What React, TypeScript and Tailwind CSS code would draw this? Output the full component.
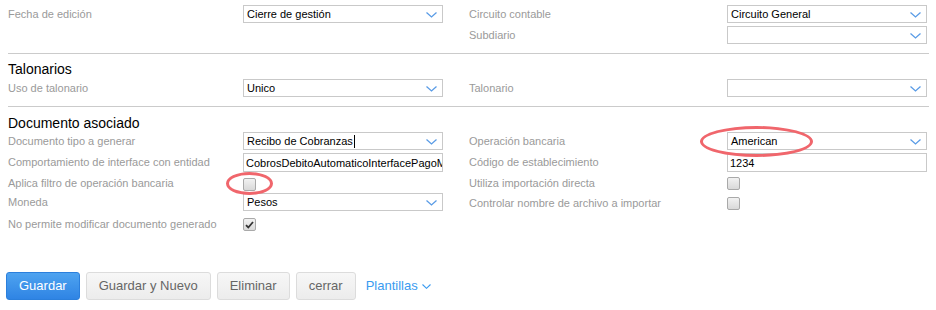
import type { ReactNode } from 'react'

const font = "font-['Liberation_Sans',Arial,sans-serif]"

function Chevron({ className = '' }: { className?: string }) {
  return (
    <svg width="11" height="6" viewBox="0 0 11 6" className={className}>
      <path d="M0.5 0.5 L5.5 5 L10.5 0.5" fill="none" stroke="#5a9ce6" strokeWidth="1.3" />
    </svg>
  )
}

function Select({ value, caret }: { value?: string; caret?: boolean }) {
  return (
    <div className="relative flex h-[18px] w-[200px] items-center border border-[#c9c9c9] bg-white pl-[3px] pr-[20px] pt-px text-[11px] text-black">
      <span className="whitespace-nowrap">{value}</span>
      {caret && <span className="ml-px h-[13px] w-px bg-black" />}
      <Chevron className="absolute right-[5px] top-[6px]" />
    </div>
  )
}

function Input({ value }: { value: string }) {
  return (
    <div className="flex h-[19px] w-[200px] items-center overflow-hidden border border-[#c9c9c9] bg-white pl-[2px] pt-px text-[11px] text-black">
      <span className="whitespace-nowrap">{value}</span>
    </div>
  )
}

function Checkbox({ checked }: { checked?: boolean }) {
  return (
    <div className="flex h-[13px] w-[13px] items-center justify-center rounded-[2px] border border-[#a9a9a9] bg-gradient-to-b from-[#f2f2f2] to-[#d9d9d9]">
      {checked && (
        <svg width="9" height="8" viewBox="0 0 9 8">
          <path d="M1 4.2 L3.3 6.5 L8 1" fill="none" stroke="#333" strokeWidth="1.8" />
        </svg>
      )}
    </div>
  )
}

function Row({ label, children, h = 'h-[18px]' }: { label?: string; children?: ReactNode; h?: string }) {
  return (
    <div className={`grid grid-cols-[235px_200px] items-center ${h}`}>
      <span className="whitespace-nowrap text-[11px] text-[#9a9a9a]">{label}</span>
      <div className="flex items-center">{children}</div>
    </div>
  )
}

function RowR({ label, children, h = 'h-[18px]' }: { label?: string; children?: ReactNode; h?: string }) {
  return (
    <div className={`grid grid-cols-[258px_200px] items-center ${h}`}>
      <span className="whitespace-nowrap text-[11px] text-[#9a9a9a]">{label}</span>
      <div className="flex items-center">{children}</div>
    </div>
  )
}

function Ellipse({ className }: { className: string }) {
  return <div className={`pointer-events-none absolute rounded-[50%] border-[3px] border-[#f0666c] ${className}`} />
}

export default function App() {
  return (
    <div className={`${font} relative h-[310px] w-[936px] bg-white`}>
      <div className="pl-[8px] pr-[7px] pt-[5px]">
        {/* Section 1 */}
        <div className="grid grid-cols-[461px_1fr]">
          <div className="flex flex-col gap-[3px]">
            <Row label="Fecha de edición">
              <Select value="Cierre de gestión" />
            </Row>
          </div>
          <div className="flex flex-col gap-[3px]">
            <RowR label="Circuito contable">
              <Select value="Circuito General" />
            </RowR>
            <RowR label="Subdiario">
              <Select />
            </RowR>
          </div>
        </div>

        <div className="mt-[9px] h-px bg-[#cbcbcb]" />

        {/* Talonarios */}
        <h2 className="mt-[6px] h-[18px] text-[14px] leading-[18px] text-black">Talonarios</h2>
        <div className="mt-[1px] grid grid-cols-[461px_1fr]">
          <Row label="Uso de talonario">
            <Select value="Unico" />
          </Row>
          <RowR label="Talonario">
            <Select />
          </RowR>
        </div>

        <div className="mt-[9px] h-px bg-[#cbcbcb]" />

        {/* Documento asociado */}
        <h2 className="mt-[7px] h-[18px] text-[14px] leading-[18px] text-black">Documento asociado</h2>
        <div className="grid grid-cols-[461px_1fr]">
          <div className="flex flex-col gap-[3px]">
            <Row label="Documento tipo a generar">
              <Select value="Recibo de Cobranzas" caret />
            </Row>
            <Row label="Comportamiento de interface con entidad" h="h-[19px]">
              <Input value="CobrosDebitoAutomaticoInterfacePagoMasivo" />
            </Row>
            <Row label="Aplica filtro de operación bancaria" h="h-[15px]">
              <div className="pt-[2px]">
                <Checkbox />
              </div>
            </Row>
            <Row label="Moneda">
              <Select value="Pesos" />
            </Row>
            <Row label="No permite modificar documento generado" h="h-[21px]">
              <Checkbox checked />
            </Row>
          </div>
          <div className="flex flex-col gap-[3px]">
            <RowR label="Operación bancaria">
              <Select value="American" />
            </RowR>
            <RowR label="Código de establecimiento" h="h-[19px]">
              <Input value="1234" />
            </RowR>
            <RowR label="Utiliza importación directa" h="h-[17px]">
              <Checkbox />
            </RowR>
            <RowR label="Controlar nombre de archivo a importar" h="h-[17px]">
              <Checkbox />
            </RowR>
          </div>
        </div>
      </div>

      {/* Buttons */}
      <div className="mt-[37px] flex items-center gap-[6px] pl-[6px] text-[13px]">
        <button className="h-[28px] rounded-[3px] border border-[#2b7fdc] bg-gradient-to-b from-[#4ea3f0] to-[#2f84e4] px-[12px] text-white">
          Guardar
        </button>
        <button className="h-[28px] rounded-[3px] border border-[#dcdcdc] bg-gradient-to-b from-[#f7f7f7] to-[#ececec] px-[12px] text-[#666]">
          Guardar y Nuevo
        </button>
        <button className="h-[28px] rounded-[3px] border border-[#dcdcdc] bg-gradient-to-b from-[#f7f7f7] to-[#ececec] px-[12px] text-[#666]">
          Eliminar
        </button>
        <button className="h-[28px] rounded-[3px] border border-[#dcdcdc] bg-gradient-to-b from-[#f7f7f7] to-[#ececec] px-[12px] text-[#666]">
          cerrar
        </button>
        <button className="ml-[4px] flex items-center gap-[4px] text-[#3a9bf0]">
          Plantillas
          <svg width="9" height="5" viewBox="0 0 9 5">
            <path d="M0.5 0.5 L4.5 4.3 L8.5 0.5" fill="none" stroke="#3a9bf0" strokeWidth="1.1" />
          </svg>
        </button>
      </div>

      {/* annotations */}
      <Ellipse className="left-[226px] top-[172px] h-[23px] w-[47px]" />
      <Ellipse className="left-[700px] top-[126px] h-[31px] w-[113px]" />
    </div>
  )
}
